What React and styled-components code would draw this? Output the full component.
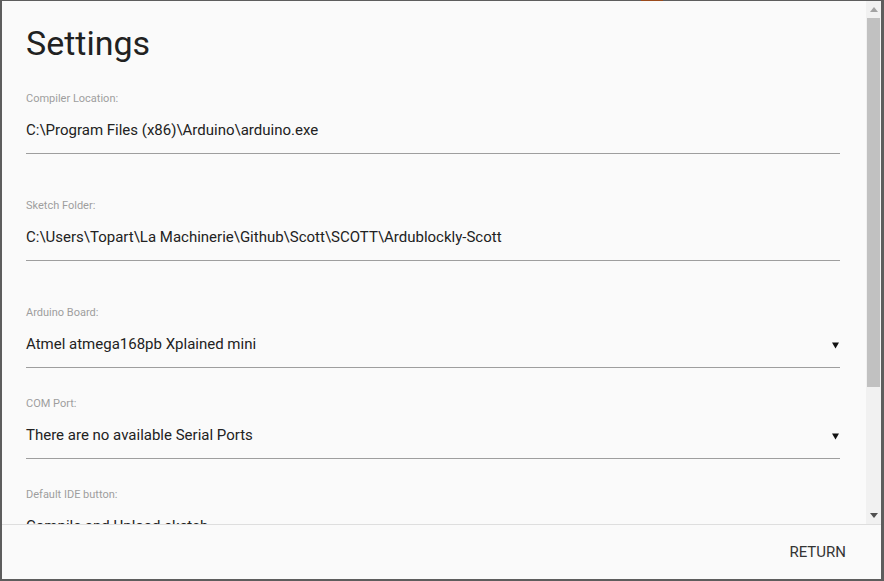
import React from "react";
import styled, { createGlobalStyle } from "styled-components";

const GlobalStyle = createGlobalStyle`
  html, body {
    margin: 0;
    padding: 0;
    background: #5d5d5d;
  }
  body {
    font-family: Roboto, "Liberation Sans", sans-serif;
  }
`;

const fields = [
  { label: "Compiler Location:", value: "C:\\Program Files (x86)\\Arduino\\arduino.exe", input: true },
  { label: "Sketch Folder:", value: "C:\\Users\\Topart\\La Machinerie\\Github\\Scott\\SCOTT\\Ardublockly-Scott", input: true },
  { label: "Arduino Board:", value: "Atmel atmega168pb Xplained mini", select: true },
  { label: "COM Port:", value: "There are no available Serial Ports", select: true },
  { label: "Default IDE button:", value: "Compile and Upload sketch", select: true },
];

const App = () => {
  return (
    <Backdrop>
      <GlobalStyle />
      <Modal>
        <Body>
          <Content>
            <Title>Settings</Title>
            {fields.map((f) => (
              <Field key={f.label} $input={f.input}>
                <Label>{f.label}</Label>
                <ValueRow>
                  <Value>{f.value}</Value>
                  {f.select && (
                    <Caret viewBox="0 0 8 7">
                      <polygon points="0,0 8,0 4,7" fill="#111" />
                    </Caret>
                  )}
                </ValueRow>
              </Field>
            ))}
          </Content>

          <Scrollbar>
            <ScrollButton>
              <Arrow viewBox="0 0 8 5" $color="#a3a3a3">
                <polygon points="0,5 8,5 4,0" />
              </Arrow>
            </ScrollButton>
            <Track>
              <Thumb />
            </Track>
            <ScrollButton>
              <Arrow viewBox="0 0 8 5" $color="#505050">
                <polygon points="0,0 8,0 4,5" />
              </Arrow>
            </ScrollButton>
          </Scrollbar>
        </Body>

        <Footer>
          <FlatButton>Return</FlatButton>
        </Footer>
      </Modal>
    </Backdrop>
  );
};

const Backdrop = styled.div`
  box-sizing: border-box;
  height: 581px;
  padding: 1px 3px 2px 2px;
  display: flex;
  background: linear-gradient(
      to right,
      transparent 641px,
      #9a4a1c 641px,
      #9a4a1c 663px,
      transparent 663px
    )
    top / 100% 1px no-repeat,
    #5d5d5d;
`;

const Modal = styled.div`
  flex: 1;
  display: flex;
  flex-direction: column;
  background: #fafafa;
  min-width: 0;
`;

const Body = styled.div`
  flex: 1;
  min-height: 0;
  display: flex;
  border-bottom: 1px solid #dedede;
`;

const Content = styled.div`
  flex: 1;
  min-width: 0;
  overflow: hidden;
  padding: 22px 26px 0 24px;
`;

const Title = styled.h4`
  margin: 0;
  font-size: 34px;
  line-height: 40px;
  font-weight: 400;
  color: #212121;
`;

const Field = styled.div`
  margin-top: 29px;
  padding-bottom: ${(p) => (p.$input ? "16px" : "0")};
`;

const Label = styled.div`
  font-size: 11px;
  line-height: 14px;
  color: #9e9e9e;
`;

const ValueRow = styled.div`
  display: flex;
  align-items: center;
  justify-content: space-between;
  margin-top: 14px;
  padding-bottom: 13px;
  border-bottom: 1px solid #9e9e9e;
`;

const Value = styled.div`
  font-size: 15px;
  line-height: 20px;
  color: #222;
  white-space: nowrap;
`;

const Caret = styled.svg`
  width: 7px;
  height: 7px;
  margin-right: 1px;
  margin-top: 2px;
`;

const Scrollbar = styled.div`
  width: 15px;
  display: flex;
  flex-direction: column;
  background: #f1f1f1;
`;

const ScrollButton = styled.div`
  height: 17px;
  display: flex;
  align-items: center;
  justify-content: center;
`;

const Arrow = styled.svg`
  width: 8px;
  height: 5px;
  fill: ${(p) => p.$color};
`;

const Track = styled.div`
  flex: 1;
  padding: 0 1px;
`;

const Thumb = styled.div`
  height: 369px;
  background: #c1c1c1;
`;

const Footer = styled.div`
  height: 54px;
  display: flex;
  align-items: center;
  justify-content: flex-end;
  padding: 0 35px 0 6px;
`;

const FlatButton = styled.button`
  border: none;
  background: transparent;
  padding: 0;
  font-family: Roboto, "Liberation Sans", sans-serif;
  font-size: 15px;
  text-transform: uppercase;
  color: #343434;
  cursor: pointer;
`;

export default App;
